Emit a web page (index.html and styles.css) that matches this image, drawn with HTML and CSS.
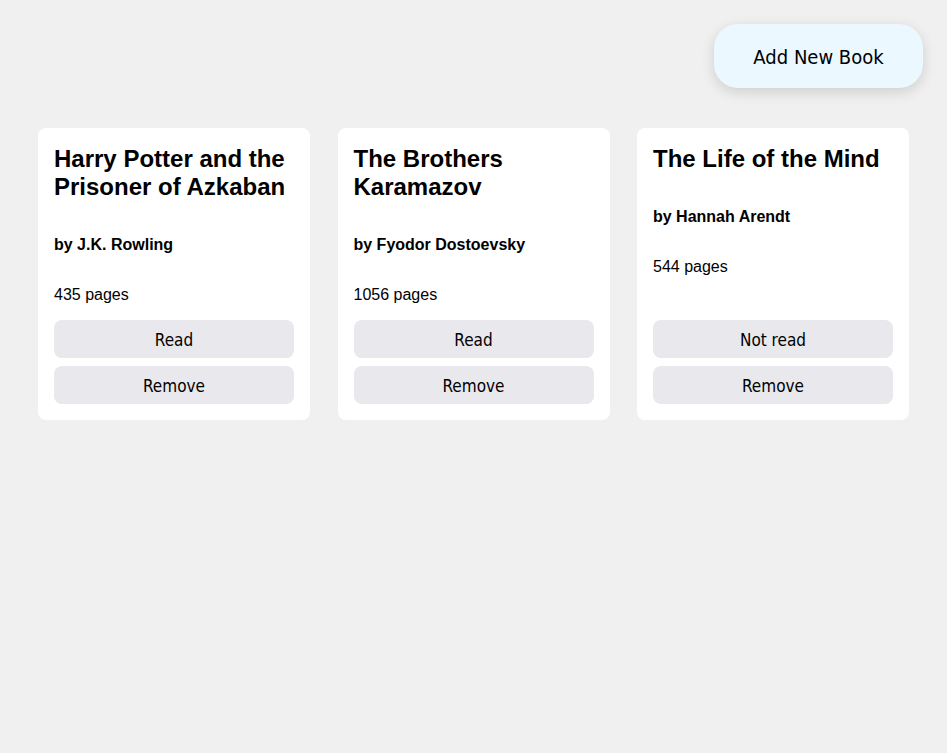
FILE: index.html
```html
<!DOCTYPE html>
<html lang="en">
<head>
<meta charset="utf-8">
<title>Library</title>
<link rel="stylesheet" href="styles.css">
</head>
<body>
<header class="top">
  <button class="add-btn">Add New Book</button>
</header>
<main class="library">
  <article class="card">
    <h2 class="title">Harry Potter and the Prisoner of Azkaban</h2>
    <p class="author">by J.K. Rowling</p>
    <p class="pages">435 pages</p>
    <div class="actions">
      <button class="btn">Read</button>
      <button class="btn">Remove</button>
    </div>
  </article>
  <article class="card">
    <h2 class="title">The Brothers Karamazov</h2>
    <p class="author">by Fyodor Dostoevsky</p>
    <p class="pages">1056 pages</p>
    <div class="actions">
      <button class="btn">Read</button>
      <button class="btn">Remove</button>
    </div>
  </article>
  <article class="card">
    <h2 class="title">The Life of the Mind</h2>
    <p class="author">by Hannah Arendt</p>
    <p class="pages">544 pages</p>
    <div class="actions">
      <button class="btn">Not read</button>
      <button class="btn">Remove</button>
    </div>
  </article>
</main>
</body>
</html>
```
FILE: styles.css
```css
html, body {
  margin: 0;
  padding: 0;
}
body {
  background: #f0f0f0;
  font-family: "Liberation Sans", Arial, sans-serif;
  color: #000;
  min-height: 753px;
}
.top {
  display: flex;
  justify-content: flex-end;
  padding: 24px 24px 0;
}
.add-btn {
  width: 209px;
  height: 64px;
  border: none;
  border-radius: 24px;
  background: #ebf8ff;
  box-shadow: 0 4px 14px rgba(0, 0, 0, 0.14);
  font-family: "DejaVu Sans Condensed", "DejaVu Sans", sans-serif;
  font-size: 20px;
  padding-top: 2px;
  color: #000;
  cursor: pointer;
}
.library {
  display: grid;
  grid-template-columns: repeat(3, 1fr);
  gap: 27.5px;
  padding: 40px 38px;
}
.card {
  background: #fff;
  border-radius: 8px;
  padding: 16px;
  display: flex;
  flex-direction: column;
}
.title {
  font-size: 24px;
  font-weight: bold;
  line-height: 28px;
  padding-top: 1px;
  margin: 0 0 18.5px;
}
.author {
  font-weight: bold;
  font-size: 16px;
  margin: 16px 0;
}
.pages {
  font-size: 16px;
  margin: 16px 0;
}
.actions {
  margin-top: auto;
  display: flex;
  flex-direction: column;
  gap: 8px;
}
.btn {
  height: 38px;
  border: none;
  border-radius: 8px;
  background: #e8e8ed;
  font-family: "DejaVu Sans Condensed", "DejaVu Sans", sans-serif;
  font-size: 17px;
  padding-top: 3px;
  color: #000;
  cursor: pointer;
}
```
